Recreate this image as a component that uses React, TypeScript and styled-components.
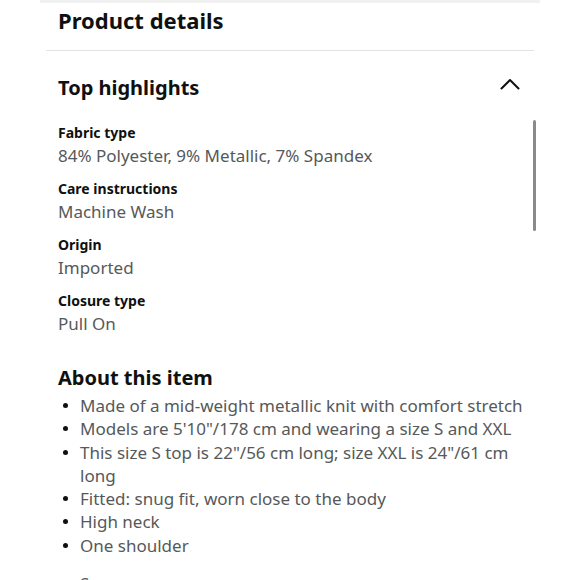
import React from 'react';
import styled, { createGlobalStyle } from 'styled-components';

const GlobalStyle = createGlobalStyle`
  html, body {
    margin: 0;
    padding: 0;
    background: #ffffff;
  }
  body {
    font-family: 'Noto Sans', 'Liberation Sans', Arial, sans-serif;
    color: #0f1111;
  }
`;

const Page = styled.div`
  width: 580px;
  height: 580px;
  overflow: hidden;
  position: relative;
  background: #ffffff;
`;

const TopEdge = styled.div`
  height: 3px;
  margin: 0 40px;
  background: #f1f1f1;
`;

const Title = styled.h2`
  margin: 2px 0 0 58px;
  font-size: 22px;
  line-height: 30px;
  font-weight: 700;
  color: #0f1111;
`;

const Divider = styled.hr`
  margin: 15px 46px 0 46px;
  border: 0;
  height: 1px;
  background: #e3e3e3;
`;

const SectionHeader = styled.div`
  display: flex;
  align-items: center;
  justify-content: space-between;
  margin: 22px 58px 0 58px;
  height: 30px;
`;

const SectionTitle = styled.h3`
  margin: 0;
  font-size: 20px;
  line-height: 30px;
  font-weight: 700;
`;

const Chevron = styled.svg`
  width: 20px;
  height: 12px;
  margin-right: 2px;
  margin-top: -9px;
`;

const Highlights = styled.div`
  position: relative;
  margin: 18px 0 0 58px;
  padding-right: 46px;
`;

const Scrollbar = styled.div`
  position: absolute;
  right: 44px;
  top: -1px;
  width: 3px;
  height: 111px;
  border-radius: 2px;
  background: #8a8a8a;
`;

const Attribute = styled.div`
  & + & {
    margin-top: 10px;
  }
`;

const Label = styled.div`
  font-size: 14px;
  line-height: 23px;
  font-weight: 700;
  color: #0f1111;
`;

const Value = styled.div`
  font-size: 17px;
  line-height: 23px;
  color: #565959;
`;

const AboutTitle = styled.h3`
  margin: 30px 0 0 58px;
  font-size: 20px;
  line-height: 26px;
  font-weight: 700;
`;

const Bullets = styled.ul`
  margin: 3px 46px 0 58px;
  padding: 0 0 0 22px;
  list-style: none;
`;

const Bullet = styled.li`
  position: relative;
  font-size: 17px;
  line-height: 23.3px;
  color: #565959;

  &::before {
    content: '';
    position: absolute;
    left: -17px;
    top: 9px;
    width: 5px;
    height: 5px;
    border-radius: 50%;
    background: #0f1111;
  }
`;

const MoreLink = styled.div`
  margin: 15px 0 0 80px;
  font-size: 17px;
  line-height: 23px;
  color: #565959;
`;

const attributes = [
  { label: 'Fabric type', value: '84% Polyester, 9% Metallic, 7% Spandex' },
  { label: 'Care instructions', value: 'Machine Wash' },
  { label: 'Origin', value: 'Imported' },
  { label: 'Closure type', value: 'Pull On' },
];

const bullets = [
  'Made of a mid-weight metallic knit with comfort stretch',
  'Models are 5\'10"/178 cm and wearing a size S and XXL',
  'This size S top is 22"/56 cm long; size XXL is 24"/61 cm long',
  'Fitted: snug fit, worn close to the body',
  'High neck',
  'One shoulder',
];

export default function App() {
  return (
    <Page>
      <GlobalStyle />
      <TopEdge />
      <Title>Product details</Title>
      <Divider />
      <SectionHeader>
        <SectionTitle>Top highlights</SectionTitle>
        <Chevron viewBox="0 0 20 12" fill="none">
          <path d="M1.5 10.5 L10 2 L18.5 10.5" stroke="#0f1111" strokeWidth="2" strokeLinecap="round" strokeLinejoin="round" />
        </Chevron>
      </SectionHeader>
      <Highlights>
        <Scrollbar />
        {attributes.map(a => (
          <Attribute key={a.label}>
            <Label>{a.label}</Label>
            <Value>{a.value}</Value>
          </Attribute>
        ))}
      </Highlights>
      <AboutTitle>About this item</AboutTitle>
      <Bullets>
        {bullets.map(b => (
          <Bullet key={b}>{b}</Bullet>
        ))}
      </Bullets>
      <MoreLink>See more</MoreLink>
    </Page>
  );
}
